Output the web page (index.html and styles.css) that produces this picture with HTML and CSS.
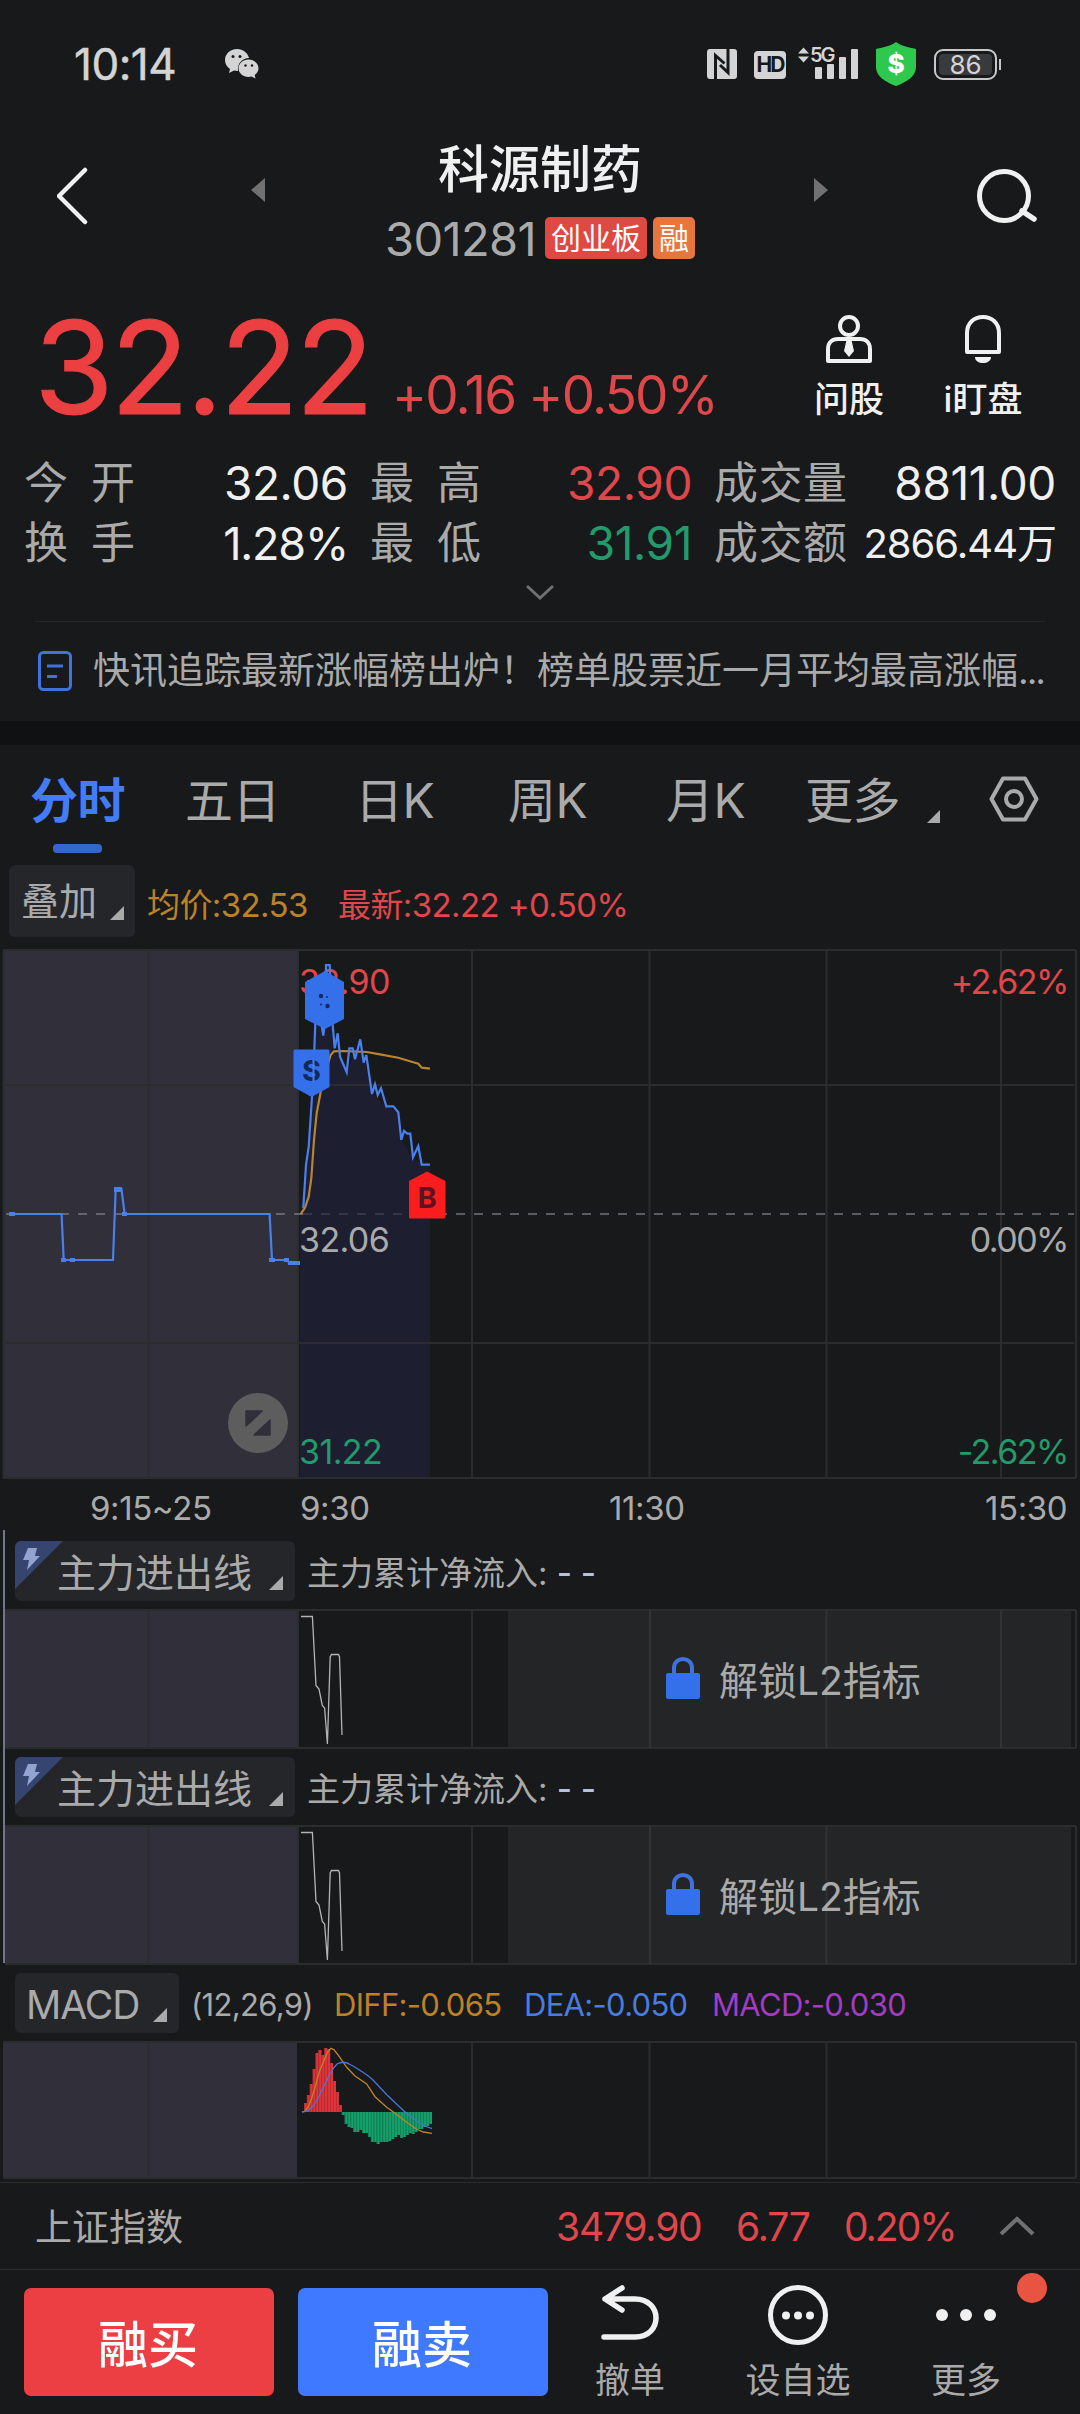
FILE: index.html
```html
<!DOCTYPE html>
<html lang="zh-CN">
<head>
  <meta charset="UTF-8">
  <title>科源制药 301281</title>
  <link rel="stylesheet" href="styles.css">
</head>
<body>

  <!-- Status bar -->
  <div class="status">
    <span class="time">10:14</span>
    <svg class="wechat" width="34" height="30" viewBox="0 0 34 30">
      <path fill="#d4d4d4" d="M12 0C5 0 0 5 0 11c0 4 2 7 5 9l-1 4 5-2.500 4 .5C12 14 18 9 24 9 23 4 18 0 12 0z"/>
      <path fill="#d4d4d4" d="M23.500 10.500c-5.500 0-10 4-10 8.800s4.500 8.700 10 8.700l3-.5 4 2-.8-3.500c2.500-1.700 3.800-4 3.800-6.700 0-4.800-4.500-8.800-10-8.800z"/>
      <g fill="#17191a"><circle cx="8" cy="7.500" r="1.500"/><circle cx="15" cy="7.500" r="1.500"/><circle cx="20.500" cy="16.500" r="1.200"/><circle cx="27" cy="16.500" r="1.200"/></g>
    </svg>
    <svg class="nfc" width="30" height="30" viewBox="0 0 30 30">
      <rect width="30" height="30" rx="3" fill="#d4d4d4"/>
      <path d="M8.500 30V6.500l9 8M21 0v23.500l-8-7.500" fill="none" stroke="#17191a" stroke-width="3"/>
    </svg>
    <span class="hd">HD</span>
    <svg class="signal" width="62" height="36" viewBox="0 0 62 36">
      <path fill="#d4d4d4" d="M0 9.500l5.500-6 5.500 6zM0 12.500l5.500 6 5.500-6z"/>
      <text x="12" y="18" class="net">5G</text>
      <g fill="#d4d4d4"><rect x="17" y="23" width="7" height="12" rx="1"/><rect x="29" y="20" width="7" height="15" rx="1"/><rect x="41" y="13" width="7" height="22" rx="1"/><rect x="53" y="5" width="7" height="30" rx="1"/></g>
    </svg>
    <svg class="shield" width="40" height="44" viewBox="0 0 40 44">
      <path fill="#2fc84f" d="M20 0c5 4 12 5 20 7v18c0 9-9 15-20 19C9 40 0 34 0 25V7c8-2 15-3 20-7z"/>
      <text x="20" y="30.500" class="dollar">$</text>
    </svg>
    <span class="battery">86</span>
  </div>

  <!-- Stock title -->
  <div class="header">
    <svg width="32" height="60" viewBox="0 0 32 60"><path d="M28 4L2 30l26 26" fill="none" stroke="#f0f0f0" stroke-width="4.500" stroke-linecap="round" stroke-linejoin="round"/></svg>
    <svg class="arrow" width="14" height="24" viewBox="0 0 14 24"><path d="M14 0v24L0 12z" fill="#717171"/></svg>
    <div class="title">
      <h1>科源制药</h1>
      <div class="code"><span class="num">301281</span><span class="tag red-tag">创业板</span><span class="tag orange-tag">融</span></div>
    </div>
    <svg class="arrow" width="14" height="24" viewBox="0 0 14 24"><path d="M0 0v24l14-12z" fill="#717171"/></svg>
    <svg width="62" height="56" viewBox="0 0 62 56"><circle cx="27" cy="28" r="24.500" fill="none" stroke="#f0f0f0" stroke-width="5"/><path d="M45 43l12 8" stroke="#f0f0f0" stroke-width="5.500" stroke-linecap="round"/></svg>
  </div>

  <!-- Quote -->
  <div class="quote">
    <span class="price">32.22</span>
    <span class="change">+0.16 +0.50%</span>
    <div class="actions">
      <div class="action">
        <svg width="46" height="48" viewBox="0 0 46 48"><g fill="none" stroke="#f0f0f0" stroke-width="4"><circle cx="23" cy="11" r="9"/><path d="M2 46V34c0-6 4-10 10-10h22c6 0 10 4 10 10v12z" stroke-linejoin="round"/></g><path d="M20.500 25h5l2.500 11-5 6-5-6z" fill="#f0f0f0"/></svg>
        <span>问股</span>
      </div>
      <div class="action">
        <svg width="36" height="48" viewBox="0 0 36 48"><path d="M2 37V18C2 8 9 2 18 2s16 6 16 16v19z" fill="none" stroke="#f0f0f0" stroke-width="4" stroke-linejoin="round"/><path d="M10 42h16c0 4-4 6-8 6s-8-2-8-6z" fill="#f0f0f0"/></svg>
        <span>i盯盘</span>
      </div>
    </div>
  </div>

  <div class="stats">
    <span class="label">今 开</span><span class="value">32.06</span>
    <span class="label">最 高</span><span class="value red">32.90</span>
    <span class="label">成交量</span><span class="value">8811.00</span>
    <span class="label">换 手</span><span class="value percent">1.28%</span>
    <span class="label">最 低</span><span class="value green">31.91</span>
    <span class="label">成交额</span><span class="value small">2866.44万</span>
  </div>
  <div class="expand">
    <svg width="28" height="17" viewBox="0 0 28 17"><path d="M1 2l13 12L27 2" fill="none" stroke="#717171" stroke-width="3"/></svg>
  </div>

  <div class="news">
    <svg width="34" height="40" viewBox="0 0 34 40"><g fill="none" stroke="#3f72de" stroke-width="3"><rect x="1.500" y="1.500" width="31" height="37" rx="4"/><path d="M9 15h16M9 25.500h10"/></g></svg>
    <span>快讯追踪最新涨幅榜出炉！榜单股票近一月平均最高涨幅<span class="dots">...</span></span>
  </div>

  <!-- Chart tabs -->
  <div class="tabs">
    <span class="tab active">分时</span>
    <span class="tab">五日</span>
    <span class="tab">日K</span>
    <span class="tab">周K</span>
    <span class="tab">月K</span>
    <span class="tab">更多</span>
    <svg class="corner" width="14" height="14" viewBox="0 0 14 14"><path d="M13 0v13H0z" fill="#aaa"/></svg>
    <svg class="setting" width="50" height="46" viewBox="0 0 50 46"><g fill="none" stroke="#aaa" stroke-width="4"><path d="M14 2.500h22L47.500 23 36 43.500H14L2.500 23z" stroke-linejoin="round"/><circle cx="25" cy="23" r="8"/></g></svg>
  </div>

  <div class="overlay-bar">
    <div class="chip overlay">叠加<svg class="corner" width="14" height="14" viewBox="0 0 14 14"><path d="M14 0v14H0z" fill="#aaa"/></svg></div>
    <span class="avg">均价:32.53</span>
    <span class="latest">最新:32.22 +0.50%</span>
  </div>

  <!-- Intraday chart -->
  <svg class="chart" width="1080" height="530" viewBox="0 949 1080 530">
    <rect x="3" y="950" width="294" height="528" fill="#302f3a"/>
    <path d="M300 1214L306 1165l6-68 4-74 10-59h4l4 84 13 24 13-33 12 55 14 12 12 6 3 28 12 17 9 7h8v313H300z" fill="#1d1e2f"/>
    <g class="grid">
      <path d="M3 950H1076M6 1085H1074M6 1343H1074M3 1478H1076"/>
      <path d="M3.500 950V1478M148.500 950V1478M298 950V1478M472 950V1478M649.500 950V1478M826.500 950V1478M1001 950V1478M1076 950V1478"/>
    </g>
    <path d="M6 1214H303" stroke="#64646e" stroke-width="2" stroke-dasharray="9 9"/>
    <path d="M303 1214H430" stroke="#34364c" stroke-width="2" stroke-dasharray="9 9"/>
    <path d="M438 1214H1074" stroke="#5a5c60" stroke-width="2" stroke-dasharray="9 9"/>

    <text x="299" y="994" class="axis red">32.90</text>
    <text x="299" y="1252" class="axis">32.06</text>
    <text x="299" y="1464" class="axis green">31.22</text>
    <text x="1068" y="994" class="axis end red">+2.62%</text>
    <text x="1068" y="1252" class="axis end">0.00%</text>
    <text x="1068" y="1464" class="axis end green">-2.62%</text>

    <path class="price-line" d="M10 1214H61.600L63.700 1260H113L115.700 1189H121.500L124.600 1214H269.600L272 1260H287.500L289 1263H300"/>
    <path d="M9 1212h6v4H9zM61 1258h5v4h-5zM70 1258h5v4h-5zM114 1187h8v5h-8zM122 1212h5v4h-5zM269 1258h6v4h-6zM284 1258h5v4h-5zM288 1261h12v4h-12z" fill="#4a80ee"/>
    <path class="avg-line" d="M300.700 1214L305 1207.700 308.700 1196.700 311.300 1178.300 314 1140 316.700 1113 320.700 1091.700 326 1070 330.700 1055 334 1051.300 343.300 1051 366.700 1052 380 1054.300 398.300 1057.700 410 1061.300 418.300 1063.700 421.700 1067.700 430 1068.700"/>
    <path class="price-line" d="M303.300 1208L306 1165 308.700 1146.700 312 1096.700 313.700 1066.700 315.300 1023.300 320 1015 323.300 1035.700 326 1010V965H329.700L332.700 1025 334.700 1048.300 337.700 1033.300 340 1056.700 346.700 1072.300 349.300 1048.300H352.700L355 1059.300 360.300 1039.300 363.700 1062.700 366.300 1055 372 1094 375 1084.300 377.700 1095 381 1088.300 386.300 1106.300H393.300L398.300 1112.300 401.300 1140 404 1131 407.300 1133.700H410.300L413 1157.300 418.300 1146 421.700 1164.700H430"/>

    <!-- sell and buy marks -->
    <path d="M325 971l19 11v37l-19 10-20-10v-37z" fill="#3370ea"/>
    <g fill="#162b5c"><circle cx="321" cy="996" r="2.200"/><circle cx="327.500" cy="1006" r="2.200"/><circle cx="327" cy="997" r="1"/><circle cx="321" cy="1004.500" r="1"/></g>
    <path d="M293.500 1051q0-1.500 1.500-1.500h33q1.500 0 1.500 1.500v36l-18 10-18-10z" fill="#3370ea"/>
    <text x="311.500" y="1081" class="mark sell">S</text>
    <path d="M313.500 1060v22" stroke="#4a80ee" stroke-width="2"/>
    <path d="M427 1171.500l18.500 9.500v36q0 1.500-1.500 1.500h-33.500q-1.500 0-1.500-1.500v-36z" fill="#fb1d1d"/>
    <text x="427" y="1208" class="mark buy">B</text>

    <circle cx="258" cy="1423" r="30" fill="#5d5d5e"/>
    <path d="M246 1411h16l-16 15zM270 1420v15h-16z" fill="#302f3a" stroke="#302f3a" stroke-width="1.500" stroke-linejoin="round"/>
  </svg>
  <div class="times"><span>9:15~25</span><span>9:30</span><span>11:30</span><span>15:30</span></div>

  <!-- Locked indicators -->
  <div class="l2-group">
    <div class="indicator">
      <div class="chip l2">
        <svg class="flash" width="48" height="48" viewBox="0 0 48 48"><path d="M0 0h48L0 48z" fill="#35456f"/><path d="M13 7h9l-2 8h5L12 29l2-10H8z" fill="#93a3cf"/></svg>
        <span>主力进出线</span><svg class="corner" width="14" height="14" viewBox="0 0 14 14"><path d="M14 0v14H0z" fill="#aaa"/></svg>
      </div>
      <span class="flow">主力累计净流入: <b>- -</b></span>
    </div>
    <div class="panel">
      <svg width="1080" height="140" viewBox="0 0 1080 140">
        <rect x="5" y="1" width="292" height="138" fill="#302f3a"/>
        <rect x="508" y="1" width="563" height="137" fill="#242527"/>
        <path class="grid" d="M5 1H1076M5 139H1076M148.500 1V139M298 1V139M472 1V139M1076 1V139"/>
        <path class="grid light" d="M650 1V139M826.500 1V139M1001 1V139"/>
        <path class="flow-line" d="M301 7.500H312.400L316 76.500 319 80 322.300 96.500 324.600 99 327.400 135 330.200 48 331.400 45.500H338.500L339.500 48 342 126"/>
      </svg>
      <div class="unlock"><svg width="34" height="44" viewBox="0 0 34 44"><path d="M8 20v-8c0-12 18-12 18 0v8" fill="none" stroke="#3f72de" stroke-width="4"/><rect y="17" width="34" height="26" rx="2" fill="#3370ea"/></svg><span>解锁L2指标</span></div>
    </div>
    <div class="indicator">
      <div class="chip l2">
        <svg class="flash" width="48" height="48" viewBox="0 0 48 48"><path d="M0 0h48L0 48z" fill="#35456f"/><path d="M13 7h9l-2 8h5L12 29l2-10H8z" fill="#93a3cf"/></svg>
        <span>主力进出线</span><svg class="corner" width="14" height="14" viewBox="0 0 14 14"><path d="M14 0v14H0z" fill="#aaa"/></svg>
      </div>
      <span class="flow">主力累计净流入: <b>- -</b></span>
    </div>
    <div class="panel">
      <svg width="1080" height="140" viewBox="0 0 1080 140">
        <rect x="5" y="1" width="292" height="138" fill="#302f3a"/>
        <rect x="508" y="1" width="563" height="137" fill="#242527"/>
        <path class="grid" d="M5 1H1076M5 139H1076M148.500 1V139M298 1V139M472 1V139M1076 1V139"/>
        <path class="grid light" d="M650 1V139M826.500 1V139"/>
        <path class="flow-line" d="M301 7.500H312.400L316 76.500 319 80 322.300 96.500 324.600 99 327.400 135 330.200 48 331.400 45.500H338.500L339.500 48 342 126"/>
      </svg>
      <div class="unlock"><svg width="34" height="44" viewBox="0 0 34 44"><path d="M8 20v-8c0-12 18-12 18 0v8" fill="none" stroke="#3f72de" stroke-width="4"/><rect y="17" width="34" height="26" rx="2" fill="#3370ea"/></svg><span>解锁L2指标</span></div>
    </div>
  </div>

  <!-- MACD -->
  <div class="indicator">
    <div class="chip macd"><span>MACD</span><svg class="corner" width="14" height="14" viewBox="0 0 14 14"><path d="M14 0v14H0z" fill="#aaa"/></svg></div>
    <div class="macd-values">
      <span>(12,26,9)</span><span class="diff">DIFF:-0.065</span><span class="dea">DEA:-0.050</span><span class="bar">MACD:-0.030</span>
    </div>
  </div>
  <svg class="chart" width="1080" height="140" viewBox="0 2041 1080 140">
    <rect x="3" y="2042" width="294" height="136" fill="#302f3a"/>
    <path class="grid" d="M3 2042H1076M3 2178H1076M148.500 2042V2178M472 2042V2178M649.500 2042V2178M826.500 2042V2178M1076 2042V2178"/>
    <g id="macdBars"></g>
    <path class="macd-line" stroke="#c08426" d="M302 2112L305 2111 308.300 2106.700 311.700 2098.300 315.700 2085 319.300 2071.700 323.300 2062.300 327.700 2051.700 331 2048.300 334.300 2050 339.300 2056.700 342.700 2061.700 346.700 2067.300 355 2076 366.700 2084 375 2096.700 386.700 2107.300 395 2113.300 406.700 2122.300 416.700 2129.300 423.300 2132 432 2133.300"/>
    <path class="macd-line" stroke="#4677d8" d="M302 2112c4 0 7-2 10-5 4-4 6-9 8-13l10-20c3-6 5-8 7-10q7-4 14 1c6 3 11 7 16 10q4 3 6 5l14 15 18 17 13 10q8 5 14 6.500"/>
  </svg>

  <!-- Index strip -->
  <div class="index">
    <span class="name">上证指数</span>
    <span class="red">3479.90</span><span class="red">6.77</span><span class="red rate">0.20%</span>
    <svg width="36" height="20" viewBox="0 0 36 20"><path d="M2 18L18 3l16 15" fill="none" stroke="#717171" stroke-width="4"/></svg>
  </div>

  <!-- Trade bar -->
  <div class="trade">
    <button class="buy-btn">融买</button>
    <button class="sell-btn">融卖</button>
    <div class="tool">
      <svg width="58" height="56" viewBox="0 0 58 56"><path d="M21 3L4 14l17 11M4 14h30c28 0 28 38 0 38H3" fill="none" stroke="#f0f0f0" stroke-width="5.500" stroke-linecap="round" stroke-linejoin="round"/></svg>
      <span>撤单</span>
    </div>
    <div class="tool wide">
      <svg width="60" height="60" viewBox="0 0 60 60"><circle cx="30" cy="30" r="27.500" fill="none" stroke="#f0f0f0" stroke-width="5"/><g fill="#f0f0f0"><circle cx="18" cy="30.500" r="4"/><circle cx="30" cy="30.500" r="4"/><circle cx="42" cy="30.500" r="4"/></g></svg>
      <span>设自选</span>
    </div>
    <div class="tool">
      <svg width="60" height="60" viewBox="0 0 60 60"><g fill="#f0f0f0"><circle cx="6" cy="30" r="6"/><circle cx="30" cy="30" r="6"/><circle cx="54" cy="30" r="6"/></g></svg>
      <span>更多</span>
      <i class="dot"></i>
    </div>
  </div>

  <script>
    // bar heights, positive above the zero line
    const bars = [9, 17, 28, 43, 59, 62, 57, 64, 63, 49, 31, 20, 7,
      -3, -12, -15, -16, -20, -20, -18, -21, -21, -25, -30, -30, -32, -30, -30, -30, -29,
      -27, -25, -23, -26, -25, -23, -21, -22, -20, -17, -17, -15, -14, -12];
    const zero = 2112;
    document.getElementById("macdBars").innerHTML = bars.map((v, i) => {
      const x = 304 + i * 2.91;
      const y = v > 0 ? zero - v : zero;
      return `<rect x="${x}" y="${y}" width="2.91" height="${Math.abs(v)}" fill="${v > 0 ? '#e0343a' : '#16a06c'}"/>` +
        `<rect x="${x}" y="${y}" width="0.8" height="${Math.abs(v)}" fill="${v > 0 ? '#b92c32' : '#128055'}"/>`;
    }).join("");
  </script>

</body>
</html>
```
FILE: styles.css
```css
body {
  margin: 0;
  width: 1080px;
  height: 2414px;
  overflow: hidden;
  background: #17191a;
  color: #aaa;
  font-family: Inter, "Noto Sans CJK SC", sans-serif;
  line-height: 1;
}

svg {
  display: block;
  flex: none;
}

span {
  white-space: nowrap;
}

.red {
  color: #e0474b;
  fill: #e0474b;
}

.green {
  color: #229a6c;
  fill: #229a6c;
}

/* status bar */
.status {
  display: flex;
  align-items: center;
  height: 128px;
  padding-left: 74px;
  color: #d4d4d4;
}

.time {
  width: 151px;
  font-size: 44px;
  letter-spacing: -0.5px;
  -webkit-text-stroke: 0.5px;
}

.nfc {
  margin-left: 448px;
}

.hd {
  width: 32px;
  margin-left: 17px;
  margin-top: 2px;
  border-radius: 4px;
  background: #d4d4d4;
  color: #17191a;
  font-size: 21px;
  font-weight: 700;
  line-height: 28px;
  text-align: center;
  letter-spacing: -2px;
}

.signal {
  margin-left: 12px;
  margin-top: -4px;
  overflow: visible;
}

.net {
  fill: #d4d4d4;
  font-size: 20px;
  font-weight: 600;
  letter-spacing: -2px;
}

.shield {
  margin-left: 16px;
}

.dollar {
  fill: #fff;
  font-size: 26px;
  font-weight: 800;
  text-anchor: middle;
}

.battery {
  position: relative;
  box-sizing: border-box;
  width: 63px;
  height: 31px;
  margin-left: 18px;
  border: 2px solid #c8c8c8;
  border-radius: 9px;
  background: #393a3e;
  box-shadow: inset 0 0 0 3px #17191a;
  font-size: 26px;
  line-height: 27px;
  text-align: center;
}

.battery::after {
  content: "";
  position: absolute;
  right: -6px;
  top: 8px;
  width: 2px;
  height: 11px;
  background: #c8c8c8;
}

/* header */
.header {
  display: grid;
  grid-template-columns: 194px 135px 428px 163px 62px;
  align-items: center;
  height: 136px;
  padding-left: 57px;
}

.arrow {
  margin-top: -12px;
}

.title {
  align-self: start;
  padding-top: 12px;
}

h1 {
  width: 308px;
  margin: 0 0 17px;
  color: #f0f0f0;
  font-size: 51px;
  font-weight: 500;
  line-height: 60px;
  text-align: center;
}

.code {
  display: flex;
  align-items: center;
  height: 42px;
}

.num {
  width: 160px;
  margin-left: -1px;
  font-size: 47px;
  letter-spacing: -0.6px;
}

.tag {
  box-sizing: border-box;
  height: 42px;
  margin-right: 6px;
  padding: 0 6px;
  border-radius: 5px;
  color: #fff;
  font-size: 30px;
  line-height: 42px;
}

.red-tag {
  background: #e04842;
}

.orange-tag {
  background: #e6763e;
}

/* quote */
.quote {
  display: flex;
  align-items: baseline;
  box-sizing: border-box;
  height: 189px;
  padding: 38px 30px 0 34px;
  color: #ec3f42;
}

.price {
  width: 358px;
  font-size: 129px;
  line-height: 130px;
  letter-spacing: -3.2px;
  -webkit-text-stroke: 1px;
}

.change {
  font-size: 53px;
  letter-spacing: -1.8px;
  color: #e0474b;
}

.actions {
  display: flex;
  align-self: flex-start;
  margin-left: auto;
  padding-top: 13px;
}

.action {
  display: flex;
  flex-direction: column;
  align-items: center;
  gap: 19px;
  width: 134px;
  color: #f0f0f0;
  font-size: 35px;
  font-weight: 500;
}

.stats {
  display: grid;
  grid-template-columns: 111px 213px 111px 209px 135px 209px;
  grid-auto-rows: 60px;
  padding-left: 24px;
  font-size: 46px;
  line-height: 61px;
}

.label {
  text-align-last: justify;
  font-size: 44px;
}

.value {
  text-align: right;
  letter-spacing: -0.4px;
}

.stats .value:not(.red):not(.green) {
  color: #f0f0f0;
}

/* second and third pair sit after a gutter */
.stats .label:nth-child(6n + 3) {
  margin-left: 22px;
  margin-right: -22px;
}

.stats .value:nth-child(6n + 4) {
  margin-right: -22px;
}

.stats .label:nth-child(6n + 5),
.stats .value:nth-child(6n) {
  margin-left: 44px;
  margin-right: -44px;
}

.stats {
  grid-template-columns: 111px 213px 111px 211px 133px 209px;
}

.value.percent {
  font-size: 45px;
  letter-spacing: -1.2px;
}

.value.small {
  font-size: 40px;
  letter-spacing: -1px;
}

.expand {
  display: flex;
  justify-content: center;
  height: 37px;
  margin: 0 35px;
  padding-top: 11px;
  border-bottom: 1px solid #27282a;
}

.news {
  display: flex;
  align-items: center;
  box-sizing: border-box;
  height: 123px;
  padding: 0 0 2px 38px;
  gap: 21px;
  border-bottom: 24px solid #101113;
  font-size: 37px;
}

.dots {
  letter-spacing: -2px;
}

/* tabs */
.tabs {
  display: grid;
  grid-template-columns: 155px 170px 153px 158px 139px 122px 62px 50px;
  height: 120px;
  padding-left: 30px;
  font-size: 48px;
  line-height: 112px;
}

.tab {
  letter-spacing: -0.5px;
}

.tab.active {
  position: relative;
  color: #437cf5;
  font-weight: 700;
}

.tab.active::after {
  content: "";
  position: absolute;
  left: 23px;
  top: 99px;
  width: 49px;
  height: 9px;
  border-radius: 4px;
  background: #3566cc;
}

.tabs .corner {
  margin-top: 65px;
}

.setting {
  margin-top: 31px;
}

.overlay-bar {
  display: flex;
  height: 84px;
  padding-left: 9px;
  font-size: 33px;
  letter-spacing: -0.6px;
  line-height: 80px;
}

.chip {
  display: flex;
  align-items: center;
  justify-content: space-between;
  box-sizing: border-box;
  height: 60px;
  border-radius: 6px;
  background: #25262a;
  font-size: 39px;
  letter-spacing: 0;
}

.chip .corner {
  margin-top: 24px;
}

.chip span {
  padding-top: 3px;
}

.chip.overlay {
  width: 126px;
  height: 72px;
  padding: 0 11px 0 12px;
  font-size: 38px;
}

.avg {
  width: 191px;
  margin-left: 12px;
  color: #bd8128;
}

.latest {
  color: #e0474b;
}

/* charts */
.grid {
  fill: none;
  stroke: #2b2c2e;
  stroke-width: 2;
}

.grid.light {
  stroke: #323335;
}

.axis {
  font-size: 34px;
  letter-spacing: -0.6px;
}

.axis:not(.red):not(.green) {
  fill: #aaa;
}

.axis.end {
  text-anchor: end;
  letter-spacing: -1.5px;
}

.price-line {
  fill: none;
  stroke: #4a80ee;
  stroke-width: 2.2;
}

.avg-line {
  fill: none;
  stroke: #b98430;
  stroke-width: 2.2;
}

.mark {
  font-size: 29px;
  font-weight: 700;
  text-anchor: middle;
}

.sell {
  fill: #14295c;
}

.buy {
  fill: #5c1220;
}

.flow-line,
.macd-line {
  fill: none;
  stroke-width: 1.3;
}

.flow-line {
  stroke: #b4b4b4;
}

.times {
  display: grid;
  grid-template-columns: 210px 309px 376px auto;
  height: 54px;
  padding-left: 90px;
  font-size: 33px;
  letter-spacing: -0.4px;
  line-height: 58px;
}

.l2-group {
  position: relative;
}

/* selected pane edge */
.l2-group::before {
  content: "";
  position: absolute;
  left: 3px;
  top: -3px;
  width: 2px;
  height: 433px;
  background: #6f7686;
  z-index: 1;
}

.indicator {
  display: flex;
  align-items: center;
  height: 76px;
  padding-left: 15px;
}

.chip.l2 {
  position: relative;
  width: 280px;
  padding: 0 12px 0 42px;
  overflow: hidden;
}

.flash {
  position: absolute;
  left: 0;
  top: 0;
}

.flow {
  margin-left: 12px;
  padding-top: 5px;
  font-size: 33px;
}

.flow b {
  color: #b4c0dc;
  font-weight: 500;
}

.panel {
  position: relative;
}

.unlock {
  position: absolute;
  left: 666px;
  top: 47px;
  display: flex;
  align-items: center;
  gap: 19px;
  font-size: 39px;
}

.unlock span {
  padding-top: 4px;
}

.chip.macd {
  width: 164px;
  padding: 0 12px 0 11px;
  letter-spacing: -1px;
}

.macd-values {
  display: grid;
  grid-template-columns: 143px 190px 188px auto;
  margin-left: 12px;
  padding-top: 2px;
  font-size: 31px;
  letter-spacing: -0.7px;
}

.diff {
  color: #bd8128;
}

.dea {
  color: #4a7ce0;
}

.bar {
  color: #a23cc4;
}

/* bottom */
.index {
  display: grid;
  grid-template-columns: 521px 180px 108px 155px 36px;
  align-items: center;
  height: 86px;
  margin-top: 1px;
  padding-left: 35px;
  border-top: 1px solid #2b2c2e;
  border-bottom: 1px solid #2b2c2e;
  font-size: 39px;
  letter-spacing: -1.2px;
}

.index .rate {
  letter-spacing: -2px;
}

.index .name {
  padding-top: 2px;
  font-size: 37px;
  letter-spacing: 0;
}

.trade {
  display: flex;
  align-items: flex-start;
  padding: 18px 0 0 24px;
}

.trade button {
  width: 250px;
  height: 108px;
  margin-right: 24px;
  padding: 0 2px 2px 0;
  border: none;
  border-radius: 7px;
  color: #fff;
  font-family: inherit;
  font-size: 50px;
  font-weight: 500;
}

.buy-btn {
  background: #ec3f43;
}

.sell-btn {
  background: #3f79ff;
}

.tool {
  position: relative;
  display: flex;
  flex-direction: column;
  align-items: center;
  justify-content: space-between;
  width: 116px;
  height: 113px;
  margin-top: -3px;
  font-size: 35px;
}

.tool.wide {
  width: 220px;
}

.dot {
  position: absolute;
  right: -23px;
  top: -12px;
  width: 30px;
  height: 30px;
  border-radius: 50%;
  background: #e95442;
}
```
